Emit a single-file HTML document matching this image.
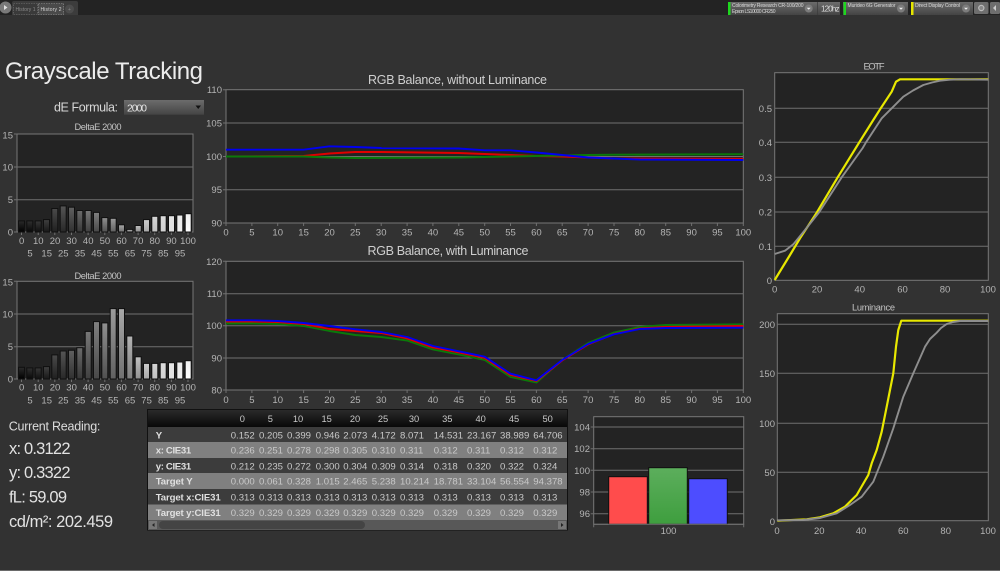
<!DOCTYPE html>
<html><head><meta charset="utf-8"><title>Grayscale Tracking</title>
<style>
html,body{margin:0;padding:0;background:#323232;width:1000px;height:571px;overflow:hidden}
svg{display:block;filter:blur(.3px)}
text{font-family:"Liberation Sans",sans-serif;fill:#b4b4b4;font-size:9.5px}
.t{fill:#cfcfcf;font-size:12.5px;text-anchor:middle}
.s{fill:#c4c4c4;font-size:9.3px;text-anchor:middle}
.e{text-anchor:end}.m{text-anchor:middle}
.r{fill:#e2e2e2;font-size:16.5px}
.tv{fill:#c8c8c8;font-size:9.6px}
.tl{fill:#e0e0e0;font-size:9.6px;font-weight:bold}
.th{fill:#c8c8c8;font-size:9.3px;text-anchor:middle}
.w{fill:#d8d8d8;font-size:5px}
.f{fill:#232323;stroke:#777;stroke-width:1}
.g{stroke:#707070;stroke-width:1;fill:none}
.l{fill:none;stroke-width:1.9;stroke-linejoin:round}
.y{stroke-width:2.2}
.b rect{stroke:#101010;stroke-width:1}
</style></head><body>
<svg width="1000" height="571" viewBox="0 0 1000 571" xmlns="http://www.w3.org/2000/svg">
<defs>
<linearGradient id="wg" x1="0" y1="0" x2="0" y2="1"><stop offset="0" stop-color="#6c6c6c"/><stop offset="1" stop-color="#444"/></linearGradient>
<linearGradient id="hd" x1="0" y1="0" x2="0" y2="1"><stop offset="0" stop-color="#2a2a2a"/><stop offset="1" stop-color="#080808"/></linearGradient>
<linearGradient id="gr" x1="0" y1="0" x2="0" y2="1"><stop offset="0" stop-color="#5cae5c"/><stop offset="1" stop-color="#3e9e3e"/></linearGradient>
<linearGradient id="a0" x1="0" y1="0" x2="0" y2="1"><stop offset="0" stop-color="#2a2a2a"/><stop offset="1" stop-color="#000"/></linearGradient>
<linearGradient id="a1" x1="0" y1="0" x2="0" y2="1"><stop offset="0" stop-color="#303030"/><stop offset="1" stop-color="#080808"/></linearGradient>
<linearGradient id="a2" x1="0" y1="0" x2="0" y2="1"><stop offset="0" stop-color="#383838"/><stop offset="1" stop-color="#101010"/></linearGradient>
<linearGradient id="a3" x1="0" y1="0" x2="0" y2="1"><stop offset="0" stop-color="#404040"/><stop offset="1" stop-color="#181818"/></linearGradient>
<linearGradient id="a4" x1="0" y1="0" x2="0" y2="1"><stop offset="0" stop-color="#4a4a4a"/><stop offset="1" stop-color="#202020"/></linearGradient>
<linearGradient id="a5" x1="0" y1="0" x2="0" y2="1"><stop offset="0" stop-color="#555"/><stop offset="1" stop-color="#282828"/></linearGradient>
<linearGradient id="a6" x1="0" y1="0" x2="0" y2="1"><stop offset="0" stop-color="#606060"/><stop offset="1" stop-color="#303030"/></linearGradient>
<linearGradient id="a7" x1="0" y1="0" x2="0" y2="1"><stop offset="0" stop-color="#6a6a6a"/><stop offset="1" stop-color="#383838"/></linearGradient>
<linearGradient id="a8" x1="0" y1="0" x2="0" y2="1"><stop offset="0" stop-color="#787878"/><stop offset="1" stop-color="#404040"/></linearGradient>
<linearGradient id="a9" x1="0" y1="0" x2="0" y2="1"><stop offset="0" stop-color="#808080"/><stop offset="1" stop-color="#484848"/></linearGradient>
<linearGradient id="a10" x1="0" y1="0" x2="0" y2="1"><stop offset="0" stop-color="#909090"/><stop offset="1" stop-color="#505050"/></linearGradient>
<linearGradient id="a11" x1="0" y1="0" x2="0" y2="1"><stop offset="0" stop-color="#9c9c9c"/><stop offset="1" stop-color="#606060"/></linearGradient>
<linearGradient id="a12" x1="0" y1="0" x2="0" y2="1"><stop offset="0" stop-color="#a8a8a8"/><stop offset="1" stop-color="#707070"/></linearGradient>
<linearGradient id="a13" x1="0" y1="0" x2="0" y2="1"><stop offset="0" stop-color="#b4b4b4"/><stop offset="1" stop-color="#808080"/></linearGradient>
<linearGradient id="a14" x1="0" y1="0" x2="0" y2="1"><stop offset="0" stop-color="#c0c0c0"/><stop offset="1" stop-color="#909090"/></linearGradient>
<linearGradient id="a15" x1="0" y1="0" x2="0" y2="1"><stop offset="0" stop-color="#ccc"/><stop offset="1" stop-color="#a8a8a8"/></linearGradient>
<linearGradient id="a16" x1="0" y1="0" x2="0" y2="1"><stop offset="0" stop-color="#d4d4d4"/><stop offset="1" stop-color="#c0c0c0"/></linearGradient>
<linearGradient id="a17" x1="0" y1="0" x2="0" y2="1"><stop offset="0" stop-color="#dcdcdc"/><stop offset="1" stop-color="#d0d0d0"/></linearGradient>
<linearGradient id="a18" x1="0" y1="0" x2="0" y2="1"><stop offset="0" stop-color="#e4e4e4"/><stop offset="1" stop-color="#e0e0e0"/></linearGradient>
<linearGradient id="a19" x1="0" y1="0" x2="0" y2="1"><stop offset="0" stop-color="#eaeaea"/><stop offset="1" stop-color="#f0f0f0"/></linearGradient>
<linearGradient id="a20" x1="0" y1="0" x2="0" y2="1"><stop offset="0" stop-color="#f0f0f0"/><stop offset="1" stop-color="#fff"/></linearGradient>
</defs>

<rect width="1000" height="571" fill="#323232"/>
<rect y="570" width="1000" height="1" fill="#6a6a6a"/>

<!-- top bar -->
<rect width="1000" height="15" fill="#232323"/>
<path d="M12 15V3a2 2 0 0 1 2-2h62a2 2 0 0 1 2 2v12z" fill="#3c3c3c"/>
<circle cx="5.5" cy="7.5" r="6" fill="#7a7a7a"/>
<path d="M4 5l3.5 2.5L4 10z" fill="#e0e0e0"/>
<rect x="13.5" y="3.5" width="24" height="11" fill="#3a3a3a" stroke="#777" stroke-width=".6" stroke-dasharray="1.5 1"/>
<rect x="38.5" y="3.5" width="25" height="11" fill="#4a4a4a" stroke="#999" stroke-width=".6" stroke-dasharray="1.5 1"/>
<text x="15.5" y="10.8" class="w" style="fill:#8a8a8a" textLength="20">History 1</text>
<text x="40.5" y="10.8" class="w" textLength="21">History 2</text>
<circle cx="69.5" cy="9" r="4.5" fill="#4c4c4c"/>
<text x="69.5" y="11" class="w m" style="fill:#888">+</text>

<rect x="728" y="2" width="112" height="13" fill="url(#wg)"/>
<rect x="728" y="2" width="2.5" height="13" fill="#1ed81e"/>
<text x="732" y="7" class="w" textLength="71.5">Colorimetry Research CR-100/200</text>
<text x="732" y="13" class="w" textLength="43.5">Epson LS10000 CR250</text>
<circle cx="808.7" cy="8.5" r="4" fill="#7c7c7c"/>
<path d="M806.7 7.8h4l-2 2z" fill="#eee"/>
<rect x="817" y="2" width=".7" height="13" fill="#3a3a3a"/>
<text x="821" y="11.5" style="font-size:8px;fill:#ddd" textLength="18.5">120hz</text>

<rect x="843" y="2" width="65" height="13" fill="url(#wg)"/>
<rect x="843.5" y="2" width="2.5" height="13" fill="#1ed81e"/>
<text x="847.5" y="7" class="w" textLength="48">Murideo 6G Generator</text>
<circle cx="901" cy="8.5" r="4" fill="#7c7c7c"/>
<path d="M899 7.8h4l-2 2z" fill="#eee"/>

<rect x="911" y="2" width="62" height="13" fill="url(#wg)"/>
<rect x="911" y="2" width="2.5" height="13" fill="#e6e600"/>
<text x="915" y="7" class="w" textLength="45">Direct Display Control</text>
<circle cx="966" cy="8.5" r="4" fill="#7c7c7c"/>
<path d="M964 7.8h4l-2 2z" fill="#eee"/>

<rect x="974" y="2" width="14.5" height="12" rx="1.5" fill="#6e6e6e"/>
<circle cx="981.3" cy="8" r="2.6" fill="#888" stroke="#bbb" stroke-width="1.2"/>
<rect x="990" y="2" width="10" height="12" rx="1.5" fill="#6e6e6e"/>
<path d="M996 5v6l-3-3z" fill="#ccc"/>

<!-- heading -->
<text x="5" y="79" style="font-size:24px;fill:#ececec" textLength="198">Grayscale Tracking</text>
<text x="54" y="111.7" style="font-size:12.5px;fill:#d8d8d8" textLength="64">dE Formula:</text>
<rect x="124" y="100" width="80" height="14.7" fill="url(#wg)"/>
<text x="127" y="111.5" style="font-size:10.5px;fill:#e4e4e4" textLength="20">2000</text>
<path d="M195.5 105.5h5.5l-2.75 3.5z" fill="#111"/>

<!-- DeltaE 1 -->
<text x="98" y="130" class="s" textLength="47">DeltaE 2000</text>
<rect x="17" y="134" width="176" height="98" class="f"/>
<path class="g" d="M17 167H193M17 199.7H193M14 134h3M14 167h3M14 199.7h3M14 232h3M21.5 232v3M38.2 232v3M54.8 232v3M71.5 232v3M88.1 232v3M104.8 232v3M121.4 232v3M138.1 232v3M154.7 232v3M171.4 232v3M188 232v3"/>
<g class="b">
<rect x="18.5" y="220.9" width="6" height="11.1" fill="url(#a0)"/><rect x="26.8" y="220.9" width="6" height="11.1" fill="url(#a1)"/><rect x="35.2" y="220.9" width="6" height="11.1" fill="url(#a2)"/><rect x="43.5" y="219.6" width="6" height="12.4" fill="url(#a3)"/><rect x="51.8" y="208.5" width="6" height="23.5" fill="url(#a4)"/><rect x="60.2" y="205.9" width="6" height="26.1" fill="url(#a5)"/><rect x="68.5" y="207.2" width="6" height="24.8" fill="url(#a6)"/><rect x="76.8" y="210.5" width="6" height="21.5" fill="url(#a7)"/><rect x="85.2" y="210.5" width="6" height="21.5" fill="url(#a8)"/><rect x="93.5" y="212.4" width="6" height="19.6" fill="url(#a9)"/><rect x="101.8" y="217.6" width="6" height="14.4" fill="url(#a10)"/><rect x="110.2" y="218.3" width="6" height="13.7" fill="url(#a11)"/><rect x="118.5" y="224.8" width="6" height="7.2" fill="url(#a12)"/><rect x="126.8" y="229.4" width="6" height="2.6" fill="url(#a13)"/><rect x="135.2" y="225.5" width="6" height="6.5" fill="url(#a14)"/><rect x="143.5" y="219.6" width="6" height="12.4" fill="url(#a15)"/><rect x="151.8" y="216.3" width="6" height="15.7" fill="url(#a16)"/><rect x="160.2" y="215.7" width="6" height="16.3" fill="url(#a17)"/><rect x="168.5" y="215.7" width="6" height="16.3" fill="url(#a18)"/><rect x="176.8" y="215" width="6" height="17" fill="url(#a19)"/><rect x="185.2" y="213.7" width="6" height="18.3" fill="url(#a20)"/>
</g>
<g class="e"><text x="13" y="138.5">15</text><text x="13" y="170.5">10</text><text x="13" y="203">5</text><text x="13" y="235.5">0</text></g>
<g class="m"><text x="21.7" y="244">0</text><text x="38.3" y="244">10</text><text x="55" y="244">20</text><text x="71.6" y="244">30</text><text x="88.2" y="244">40</text><text x="104.9" y="244">50</text><text x="121.5" y="244">60</text><text x="138.1" y="244">70</text><text x="154.8" y="244">80</text><text x="171.4" y="244">90</text><text x="188" y="244">100</text>
<text x="30" y="256.7">5</text><text x="46.7" y="256.7">15</text><text x="63.3" y="256.7">25</text><text x="80" y="256.7">35</text><text x="96.6" y="256.7">45</text><text x="113.3" y="256.7">55</text><text x="130" y="256.7">65</text><text x="146.6" y="256.7">75</text><text x="163.3" y="256.7">85</text><text x="180" y="256.7">95</text></g>

<!-- DeltaE 2 -->
<text x="98" y="279" class="s" textLength="47">DeltaE 2000</text>
<rect x="17" y="281.3" width="176" height="97.7" class="f"/>
<path class="g" d="M17 314H193M17 346.7H193M14 281.3h3M14 314h3M14 346.7h3M14 379h3M21.5 379v3M38.2 379v3M54.8 379v3M71.5 379v3M88.1 379v3M104.8 379v3M121.4 379v3M138.1 379v3M154.7 379v3M171.4 379v3M188 379v3"/>
<g class="b">
<rect x="18.5" y="367.3" width="6" height="11.7" fill="url(#a0)"/><rect x="26.8" y="367.9" width="6" height="11.1" fill="url(#a1)"/><rect x="35.2" y="367.9" width="6" height="11.1" fill="url(#a2)"/><rect x="43.5" y="366.6" width="6" height="12.4" fill="url(#a3)"/><rect x="51.8" y="354.9" width="6" height="24.1" fill="url(#a4)"/><rect x="60.2" y="351" width="6" height="28" fill="url(#a5)"/><rect x="68.5" y="350.3" width="6" height="28.7" fill="url(#a6)"/><rect x="76.8" y="347.7" width="6" height="31.3" fill="url(#a7)"/><rect x="85.2" y="331.4" width="6" height="47.6" fill="url(#a8)"/><rect x="93.5" y="321.6" width="6" height="57.4" fill="url(#a9)"/><rect x="101.8" y="322.9" width="6" height="56.1" fill="url(#a10)"/><rect x="110.2" y="308.6" width="6" height="70.4" fill="url(#a11)"/><rect x="118.5" y="308.6" width="6" height="70.4" fill="url(#a12)"/><rect x="126.8" y="336" width="6" height="43" fill="url(#a13)"/><rect x="135.2" y="356.8" width="6" height="22.2" fill="url(#a14)"/><rect x="143.5" y="363.4" width="6" height="15.6" fill="url(#a15)"/><rect x="151.8" y="363.4" width="6" height="15.6" fill="url(#a16)"/><rect x="160.2" y="362.7" width="6" height="16.3" fill="url(#a17)"/><rect x="168.5" y="362.7" width="6" height="16.3" fill="url(#a18)"/><rect x="176.8" y="362" width="6" height="17" fill="url(#a19)"/><rect x="185.2" y="360.7" width="6" height="18.3" fill="url(#a20)"/>
</g>
<g class="e"><text x="13" y="285.5">15</text><text x="13" y="317.5">10</text><text x="13" y="350">5</text><text x="13" y="382.5">0</text></g>
<g class="m"><text x="21.7" y="390.7">0</text><text x="38.3" y="390.7">10</text><text x="55" y="390.7">20</text><text x="71.6" y="390.7">30</text><text x="88.2" y="390.7">40</text><text x="104.9" y="390.7">50</text><text x="121.5" y="390.7">60</text><text x="138.1" y="390.7">70</text><text x="154.8" y="390.7">80</text><text x="171.4" y="390.7">90</text><text x="188" y="390.7">100</text>
<text x="30" y="403.3">5</text><text x="46.7" y="403.3">15</text><text x="63.3" y="403.3">25</text><text x="80" y="403.3">35</text><text x="96.6" y="403.3">45</text><text x="113.3" y="403.3">55</text><text x="130" y="403.3">65</text><text x="146.6" y="403.3">75</text><text x="163.3" y="403.3">85</text><text x="180" y="403.3">95</text></g>

<!-- RGB 1 -->
<text x="457.5" y="84" class="t" textLength="179">RGB Balance, without Luminance</text>
<rect x="226" y="89.7" width="517.3" height="133.3" class="f"/>
<path class="g" d="M226 123H743.3M226 156.5H743.3M226 189.7H743.3M223 89.7h3M223 123h3M223 156.5h3M223 189.7h3M223 223h3M226 223v3M251.9 223v3M277.7 223v3M303.6 223v3M329.5 223v3M355.3 223v3M381.2 223v3M407.1 223v3M432.9 223v3M458.8 223v3M484.7 223v3M510.5 223v3M536.4 223v3M562.2 223v3M588.1 223v3M614 223v3M639.8 223v3M665.7 223v3M691.6 223v3M717.4 223v3M743.3 223v3"/>
<polyline class="l" stroke="#e00000" points="226,156.5 303.6,156 329.5,153.5 355.3,152 381.2,152 458.8,153 484.7,154 510.5,155 536.4,156 562.2,156.5 588.1,157.5 614,158.5 743.3,158.8"/>
<polyline class="l" stroke="#0a7a0a" points="226,156.5 303.6,156.5 329.5,157.5 355.3,158 458.8,157.5 484.7,157 536.4,156 588.1,155 614,154.7 743.3,154.2"/>
<polyline class="l" stroke="#0000f0" points="226,149.7 303.6,149.7 329.5,146.3 355.3,147 381.2,148 458.8,148.5 484.7,150.3 510.5,150.3 536.4,152.5 562.2,155 588.1,157.5 614,158.5 639.8,159.5 743.3,160"/>
<g class="e"><text x="222" y="93.2">110</text><text x="222" y="126.5">105</text><text x="222" y="160">100</text><text x="222" y="193">95</text><text x="222" y="226.5">90</text></g>
<g class="m"><text x="226" y="235.3">0</text><text x="251.9" y="235.3">5</text><text x="277.7" y="235.3">10</text><text x="303.6" y="235.3">15</text><text x="329.5" y="235.3">20</text><text x="355.3" y="235.3">25</text><text x="381.2" y="235.3">30</text><text x="407.1" y="235.3">35</text><text x="432.9" y="235.3">40</text><text x="458.8" y="235.3">45</text><text x="484.7" y="235.3">50</text><text x="510.5" y="235.3">55</text><text x="536.4" y="235.3">60</text><text x="562.2" y="235.3">65</text><text x="588.1" y="235.3">70</text><text x="614" y="235.3">75</text><text x="639.8" y="235.3">80</text><text x="665.7" y="235.3">85</text><text x="691.6" y="235.3">90</text><text x="717.4" y="235.3">95</text><text x="743.3" y="235.3">100</text></g>

<!-- RGB 2 -->
<text x="448" y="255" class="t" textLength="161">RGB Balance, with Luminance</text>
<rect x="226" y="261.3" width="517.3" height="128.7" class="f"/>
<path class="g" d="M226 293.7H743.3M226 325.7H743.3M226 358H743.3M223 261.3h3M223 293.7h3M223 325.7h3M223 358h3M223 390h3M226 390v3M251.9 390v3M277.7 390v3M303.6 390v3M329.5 390v3M355.3 390v3M381.2 390v3M407.1 390v3M432.9 390v3M458.8 390v3M484.7 390v3M510.5 390v3M536.4 390v3M562.2 390v3M588.1 390v3M614 390v3M639.8 390v3M665.7 390v3M691.6 390v3M717.4 390v3M743.3 390v3"/>
<polyline class="l" stroke="#0a7a0a" points="226,323.5 251.9,323.5 277.7,324 303.6,326 329.5,331 355.3,335 381.2,337 407.1,340.5 432.9,349.5 458.8,354.5 484.7,360 510.5,377 536.4,382.5 562.2,360 588.1,343 614,332.5 639.8,327 665.7,325 743.3,324.3"/>
<polyline class="l" stroke="#e00000" points="226,321.5 251.9,321.5 277.7,322 303.6,324 329.5,329 355.3,331 381.2,333 407.1,338.5 432.9,347.5 458.8,352.5 484.7,358 510.5,375 536.4,381 562.2,360.5 588.1,344.5 614,334 639.8,328.5 665.7,327 743.3,326"/>
<polyline class="l" stroke="#0000f0" points="226,320.3 251.9,320.3 277.7,321 303.6,323 329.5,326 355.3,329.3 381.2,332 407.1,337 432.9,346 458.8,351.3 484.7,356.7 510.5,373.7 536.4,380.3 562.2,360 588.1,344 614,334.3 639.8,329 665.7,328 743.3,327.7"/>
<g class="e"><text x="222" y="264.8">120</text><text x="222" y="297.2">110</text><text x="222" y="329.2">100</text><text x="222" y="361.5">90</text><text x="222" y="393.5">80</text></g>
<g class="m"><text x="226" y="403">0</text><text x="251.9" y="403">5</text><text x="277.7" y="403">10</text><text x="303.6" y="403">15</text><text x="329.5" y="403">20</text><text x="355.3" y="403">25</text><text x="381.2" y="403">30</text><text x="407.1" y="403">35</text><text x="432.9" y="403">40</text><text x="458.8" y="403">45</text><text x="484.7" y="403">50</text><text x="510.5" y="403">55</text><text x="536.4" y="403">60</text><text x="562.2" y="403">65</text><text x="588.1" y="403">70</text><text x="614" y="403">75</text><text x="639.8" y="403">80</text><text x="665.7" y="403">85</text><text x="691.6" y="403">90</text><text x="717.4" y="403">95</text><text x="743.3" y="403">100</text></g>

<!-- EOTF -->
<text x="874" y="69.5" class="s" textLength="21">EOTF</text>
<rect x="774.7" y="72.7" width="213.6" height="207.6" class="f"/>
<path class="g" d="M774.7 108.3H988.3M774.7 142.3H988.3M774.7 177.3H988.3M774.7 212H988.3M774.7 246.3H988.3"/>
<polyline class="l y" stroke="#e8e800" points="774.7,280 790,255 800,238.3 816.7,212.7 837.7,177.3 859.3,142.3 873.3,120 880.7,108.3 891.7,91.7 896,81.7 900,79.3 988.3,79.3"/>
<polyline class="l" stroke="#8e8e8e" points="774.7,254 785,250.7 793.3,244.3 805,230 819.3,212 841.7,177.3 862.7,148 866,142.3 881.7,118.3 891.7,108.3 903.3,96.7 913,90.5 923.3,85 932,82.5 940,80.7 950,79.7 960,79.3 988.3,79.7"/>
<g class="e"><text x="772" y="112">0.5</text><text x="772" y="146">0.4</text><text x="772" y="181">0.3</text><text x="772" y="215.5">0.2</text><text x="772" y="250">0.1</text><text x="772" y="284">0</text></g>
<g class="m"><text x="774.7" y="292.7">0</text><text x="817" y="292.7">20</text><text x="859.7" y="292.7">40</text><text x="902.5" y="292.7">60</text><text x="945" y="292.7">80</text><text x="988" y="292.7">100</text></g>

<!-- Luminance -->
<text x="873.5" y="310.7" class="s" textLength="43">Luminance</text>
<rect x="777.3" y="313.7" width="211" height="207" class="f"/>
<path class="g" d="M777.3 324.3H988.3M777.3 373.3H988.3M777.3 423.3H988.3M777.3 472.3H988.3"/>
<polyline class="l y" stroke="#e8e800" points="777.3,520.7 806.7,519.3 820,517.3 833.3,513.3 845,506.7 856.7,495 868.3,475 871.7,463.3 876.7,450 881.7,431.7 886.7,406.7 893.3,373.3 896,346.7 898.3,330 901.3,320.7 988.3,320.7"/>
<polyline class="l" stroke="#8e8e8e" points="777.3,520.3 803.3,520 820,518 836.7,513.3 850,505 861.7,496.7 873.3,481.7 883.3,456.7 893.3,428.3 903.3,396.7 913.3,373.3 925,346.7 930,339 936.7,332.7 941,328 946.7,324 953,322 960,321 988.3,321"/>
<g class="e"><text x="775" y="328">200</text><text x="775" y="377">150</text><text x="775" y="427">100</text><text x="775" y="476">50</text><text x="775" y="525">0</text></g>
<g class="m"><text x="777" y="534">0</text><text x="819.3" y="534">20</text><text x="861" y="534">40</text><text x="903.3" y="534">60</text><text x="945.7" y="534">80</text><text x="988" y="534">100</text></g>

<!-- Current reading -->
<text x="8.7" y="430.5" style="font-size:12.5px;fill:#dcdcdc" textLength="91.7">Current Reading:</text>
<text x="9" y="454" class="r" textLength="61.5">x: 0.3122</text>
<text x="9" y="478" class="r" textLength="61.5">y: 0.3322</text>
<text x="9" y="502.7" class="r" textLength="58">fL: 59.09</text>
<text x="9" y="527" class="r" textLength="104">cd/m²: 202.459</text>

<!-- table -->
<rect x="147.5" y="409.5" width="420" height="120.5" fill="#222" stroke="#111"/>
<rect x="148" y="410" width="419" height="17" fill="url(#hd)"/>
<rect x="148" y="427" width="419" height="15" fill="#3c3c3c"/>
<rect x="148" y="442" width="419" height="16" fill="#808080"/>
<rect x="148" y="458" width="419" height="15" fill="#3c3c3c"/>
<rect x="148" y="473" width="419" height="16" fill="#808080"/>
<rect x="148" y="489" width="419" height="15.5" fill="#3c3c3c"/>
<rect x="148" y="504.5" width="419" height="15.5" fill="#808080"/>
<rect x="148" y="520" width="419" height="10" fill="#585858"/>
<rect x="159" y="521" width="206" height="8" rx="4" fill="#444"/>
<rect x="149" y="521" width="8" height="8" fill="#777"/>
<path d="M154.5 523v4l-2.5-2z" fill="#222"/>
<rect x="558" y="521" width="8" height="8" fill="#777"/>
<path d="M561 523v4l2.5-2z" fill="#222"/>
<g><text x="242.3" y="422" class="th">0</text><text x="270.3" y="422" class="th">5</text><text x="298" y="422" class="th">10</text><text x="326.7" y="422" class="th">15</text><text x="355" y="422" class="th">20</text><text x="383" y="422" class="th">25</text><text x="414" y="422" class="th">30</text><text x="447.3" y="422" class="th">35</text><text x="480.7" y="422" class="th">40</text><text x="514" y="422" class="th">45</text><text x="547.7" y="422" class="th">50</text></g>
<g class="tl"><text class="tl" x="155.7" y="438.5">Y</text><text class="tl" x="155.7" y="453.7" textLength="35.5">x: CIE31</text><text class="tl" x="155.7" y="469.3" textLength="35.5">y: CIE31</text><text class="tl" x="155.7" y="484.5" textLength="37">Target Y</text><text class="tl" x="155.7" y="500.3" textLength="65">Target x:CIE31</text><text class="tl" x="155.7" y="516" textLength="65">Target y:CIE31</text></g>
<g>
<text class="tv" x="230.7" y="438.5">0.152</text><text class="tv" x="259" y="438.5">0.205</text><text class="tv" x="287" y="438.5">0.399</text><text class="tv" x="315.7" y="438.5">0.946</text><text class="tv" x="343.3" y="438.5">2.073</text><text class="tv" x="371.7" y="438.5">4.172</text><text class="tv" x="400" y="438.5">8.071</text><text class="tv" x="433.7" y="438.5">14.531</text><text class="tv" x="467" y="438.5">23.167</text><text class="tv" x="500" y="438.5">38.989</text><text class="tv" x="533.3" y="438.5">64.706</text>
<text class="tv" x="230.7" y="453.7">0.236</text><text class="tv" x="259" y="453.7">0.251</text><text class="tv" x="287" y="453.7">0.278</text><text class="tv" x="315.7" y="453.7">0.298</text><text class="tv" x="343.3" y="453.7">0.305</text><text class="tv" x="371.7" y="453.7">0.310</text><text class="tv" x="400" y="453.7">0.311</text><text class="tv" x="433.7" y="453.7">0.312</text><text class="tv" x="467" y="453.7">0.311</text><text class="tv" x="500" y="453.7">0.312</text><text class="tv" x="533.3" y="453.7">0.312</text>
<text class="tv" x="230.7" y="469.3">0.212</text><text class="tv" x="259" y="469.3">0.235</text><text class="tv" x="287" y="469.3">0.272</text><text class="tv" x="315.7" y="469.3">0.300</text><text class="tv" x="343.3" y="469.3">0.304</text><text class="tv" x="371.7" y="469.3">0.309</text><text class="tv" x="400" y="469.3">0.314</text><text class="tv" x="433.7" y="469.3">0.318</text><text class="tv" x="467" y="469.3">0.320</text><text class="tv" x="500" y="469.3">0.322</text><text class="tv" x="533.3" y="469.3">0.324</text>
<text class="tv" x="230.7" y="484.5">0.000</text><text class="tv" x="259" y="484.5">0.061</text><text class="tv" x="287" y="484.5">0.328</text><text class="tv" x="315.7" y="484.5">1.015</text><text class="tv" x="343.3" y="484.5">2.465</text><text class="tv" x="371.7" y="484.5">5.238</text><text class="tv" x="400" y="484.5">10.214</text><text class="tv" x="433.7" y="484.5">18.781</text><text class="tv" x="467" y="484.5">33.104</text><text class="tv" x="500" y="484.5">56.554</text><text class="tv" x="533.3" y="484.5">94.378</text>
<text class="tv" x="230.7" y="500.3">0.313</text><text class="tv" x="259" y="500.3">0.313</text><text class="tv" x="287" y="500.3">0.313</text><text class="tv" x="315.7" y="500.3">0.313</text><text class="tv" x="343.3" y="500.3">0.313</text><text class="tv" x="371.7" y="500.3">0.313</text><text class="tv" x="400" y="500.3">0.313</text><text class="tv" x="433.7" y="500.3">0.313</text><text class="tv" x="467" y="500.3">0.313</text><text class="tv" x="500" y="500.3">0.313</text><text class="tv" x="533.3" y="500.3">0.313</text>
<text class="tv" x="230.7" y="516">0.329</text><text class="tv" x="259" y="516">0.329</text><text class="tv" x="287" y="516">0.329</text><text class="tv" x="315.7" y="516">0.329</text><text class="tv" x="343.3" y="516">0.329</text><text class="tv" x="371.7" y="516">0.329</text><text class="tv" x="400" y="516">0.329</text><text class="tv" x="433.7" y="516">0.329</text><text class="tv" x="467" y="516">0.329</text><text class="tv" x="500" y="516">0.329</text><text class="tv" x="533.3" y="516">0.329</text>
</g>

<!-- bar chart -->
<rect x="593.7" y="416.7" width="150" height="107.6" class="f"/>
<path class="g" d="M593.7 427H743.7M593.7 448.7H743.7M593.7 470.3H743.7M593.7 492H743.7M593.7 513.7H743.7M590.7 427h3M590.7 448.7h3M590.7 470.3h3M590.7 492h3M590.7 513.7h3M593.7 524.3v3M743.7 524.3v3"/>
<g class="b">
<rect x="608.7" y="476.7" width="38.6" height="47.6" fill="#ff4c4c"/>
<rect x="648.7" y="467.7" width="38.6" height="56.6" fill="url(#gr)"/>
<rect x="688.7" y="478.7" width="38.6" height="45.6" fill="#4d4dff"/>
</g>
<path class="g" d="M593.7 524.3H743.7"/>
<g class="e"><text x="590" y="430.5">104</text><text x="590" y="452">102</text><text x="590" y="474">100</text><text x="590" y="495.5">98</text><text x="590" y="517">96</text></g>
<text x="668.5" y="534" class="m">100</text>
</svg>
</body></html>
